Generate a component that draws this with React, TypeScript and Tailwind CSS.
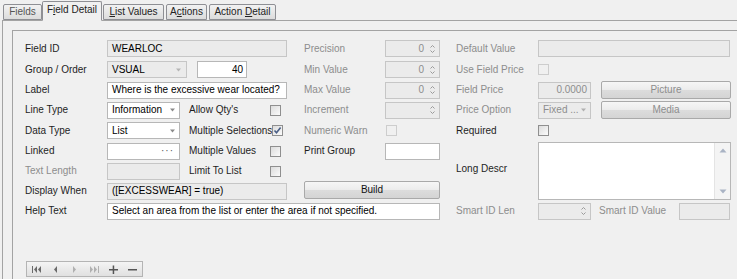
import React from 'react';

type Kids = { children?: React.ReactNode; className?: string };

const Field = ({ children, disabled, className = '' }: Kids & { disabled?: boolean }) => (
  <div
    className={`flex h-[17px] shrink-0 items-center overflow-hidden whitespace-nowrap border px-[4px] ${
      disabled ? 'border-[#c6c6c6] bg-[#ebebeb]' : 'border-[#b7b7b7] bg-white'
    } ${className}`}
  >
    {children}
  </div>
);

const DownArrow = ({ color = '#8a8a8a' }: { color?: string }) => (
  <svg width="7" height="4" viewBox="0 0 7 4" className="shrink-0">
    <path d="M1 0.5h5L3.5 3.5z" fill={color} />
  </svg>
);

const SpinArrows = () => (
  <svg width="7" height="12" viewBox="0 0 7 12" className="shrink-0">
    <path d="M1.5 4.5L3.5 2.5L5.5 4.5" fill="none" stroke="#9a9a9a" strokeWidth="1" />
    <path d="M1.5 7.5L3.5 9.5L5.5 7.5" fill="none" stroke="#9a9a9a" strokeWidth="1" />
  </svg>
);

const Check = ({ checked, disabled }: { checked?: boolean; disabled?: boolean }) => (
  <div
    className={`flex h-[11px] w-[11px] shrink-0 items-center justify-center border ${
      disabled ? 'border-[#cdcdcd] bg-[#f0f0f0]' : 'border-[#8f8f8f] bg-gradient-to-br from-[#dcdcdc] to-[#fbfbfb]'
    }`}
  >
    {checked && (
      <svg width="9" height="9" viewBox="0 0 9 9">
        <path d="M1.5 4.5L3.5 6.8L7.6 1.5" fill="none" stroke="#4a5f86" strokeWidth="1.6" />
      </svg>
    )}
  </div>
);

const Button = ({ children, disabled, className = '' }: Kids & { disabled?: boolean }) => (
  <div
    className={`flex h-[18px] shrink-0 items-center justify-center rounded-[2px] border border-[#a9a9a9] bg-[linear-gradient(#f6f6f6_0%,#ececec_48%,#dcdcdc_52%,#d4d4d4_100%)] ${
      disabled ? 'text-[#8d8d8d]' : 'text-[#111]'
    } ${className}`}
  >
    {children}
  </div>
);

const Label = ({ children, dim, className = '' }: Kids & { dim?: boolean }) => (
  <div className={`flex items-center whitespace-nowrap ${dim ? 'text-[#8d8d8d]' : 'text-[#1e1e1e]'} ${className}`}>
    {children}
  </div>
);

const Tab = ({ children, active, className = '' }: Kids & { active?: boolean }) => (
  <div
    className={`flex items-center justify-center rounded-t-[2px] border border-[#8e8f94] text-[#222] ${
      active
        ? 'relative z-10 -mb-px h-[20px] border-b-[#f0f0f0] bg-[#f0f0f0] pb-[2px]'
        : 'h-[16px] bg-[linear-gradient(#f2f2f2,#dcdcdc)]'
    } ${className}`}
  >
    {children}
  </div>
);

const NavIcon = ({ kind, color }: { kind: string; color: string }) => (
  <svg width="11" height="9" viewBox="0 0 11 9">
    {kind === 'first' && (
      <g fill={color}>
        <rect x="1" y="1" width="1" height="7" />
        <path d="M6 1v7L3 4.5z" />
        <path d="M10 1v7L7 4.5z" />
      </g>
    )}
    {kind === 'prev' && <path d="M7 1v7L4 4.5z" fill={color} />}
    {kind === 'next' && <path d="M4 1v7L7 4.5z" fill={color} />}
    {kind === 'last' && (
      <g fill={color}>
        <path d="M1 1v7L4 4.5z" />
        <path d="M5 1v7L8 4.5z" />
        <rect x="9" y="1" width="1" height="7" />
      </g>
    )}
    {kind === 'add' && (
      <g fill={color}>
        <rect x="1" y="4" width="9" height="1.5" />
        <rect x="4.7" y="0.5" width="1.5" height="8.5" />
      </g>
    )}
    {kind === 'del' && <rect x="1" y="4" width="9" height="1.5" fill={color} />}
  </svg>
);

export default function App() {
  return (
    <div className="h-[279px] w-[737px] overflow-hidden bg-[#f0f0f0] font-['Liberation_Sans',Arial,sans-serif] text-[10px] leading-none">
      {/* tab headers */}
      <div className="flex h-[20px] items-end pl-[3px]">
        <Tab className="w-[39px] text-[#555]">Fields</Tab>
        <Tab active className="w-[60px]">
          F<span className="underline">i</span>eld Detail
        </Tab>
        <Tab className="ml-px w-[61px]">
          <span className="underline">L</span>ist Values
        </Tab>
        <Tab className="ml-[2px] w-[41px]">
          A<span className="underline">c</span>tions
        </Tab>
        <Tab className="ml-[2px] w-[67px]">
          Action&nbsp;<span className="underline">D</span>etail
        </Tab>
      </div>

      {/* tab page */}
      <div className="ml-[2px] h-[260px] border-l border-t border-[#a3a3a3] pl-[9px] pt-[9px]">
        <div className="h-full border-l border-t border-[#a3a3a3] pl-[12px] pt-[7px]">
          <div className="grid grid-cols-[82px_180px_17px_81px_55px_16px_82px_193px] grid-rows-[21px_21px_20px_20px_21px_20px_20px_20px_20px] items-center">
            {/* row 1 */}
            <Label className="col-start-1 row-start-1">Field ID</Label>
            <Field disabled className="col-start-2 row-start-1">WEARLOC</Field>
            <Label dim className="col-start-4 row-start-1">Precision</Label>
            <Field disabled className="col-start-5 row-start-1 justify-end gap-[5px] pr-[3px] text-[#8d8d8d]">
              0<SpinArrows />
            </Field>
            <Label dim className="col-start-7 row-start-1">Default Value</Label>
            <Field disabled className="col-start-8 row-start-1 mr-px" />

            {/* row 2 */}
            <Label className="col-start-1 row-start-2">Group / Order</Label>
            <div className="col-start-2 row-start-2 flex gap-[10px]">
              <Field disabled className="w-[80px] justify-between">
                VSUAL<DownArrow color="#b5b5b5" />
              </Field>
              <Field className="w-[50px] justify-end pr-[3px]">40</Field>
            </div>
            <Label dim className="col-start-4 row-start-2">Min Value</Label>
            <Field disabled className="col-start-5 row-start-2 justify-end gap-[5px] pr-[3px] text-[#8d8d8d]">
              0<SpinArrows />
            </Field>
            <Label dim className="col-start-7 row-start-2">Use Field Price</Label>
            <div className="col-start-8 row-start-2">
              <Check disabled />
            </div>

            {/* row 3 */}
            <Label className="col-start-1 row-start-3">Label</Label>
            <Field className="col-start-2 row-start-3">Where is the excessive wear located?</Field>
            <Label dim className="col-start-4 row-start-3">Max Value</Label>
            <Field disabled className="col-start-5 row-start-3 justify-end gap-[5px] pr-[3px] text-[#8d8d8d]">
              0<SpinArrows />
            </Field>
            <Label dim className="col-start-7 row-start-3">Field Price</Label>
            <div className="col-start-8 row-start-3 flex items-center gap-[10px]">
              <Field disabled className="w-[53px] justify-end pr-[3px] text-[#8d8d8d]">0.0000</Field>
              <Button disabled className="w-[130px]">Picture</Button>
            </div>

            {/* row 4 */}
            <Label className="col-start-1 row-start-4">Line Type</Label>
            <div className="col-start-2 row-start-4 flex items-center">
              <Field className="w-[73px] justify-between pr-[3px]">
                Information<DownArrow />
              </Field>
              <Label className="ml-[9px] flex-1">Allow Qty's</Label>
              <div className="mr-[6px]">
                <Check />
              </div>
            </div>
            <Label dim className="col-start-4 row-start-4">Increment</Label>
            <Field disabled className="col-start-5 row-start-4 justify-end pr-[3px]">
              <SpinArrows />
            </Field>
            <Label dim className="col-start-7 row-start-4">Price Option</Label>
            <div className="col-start-8 row-start-4 flex items-center gap-[10px]">
              <Field disabled className="w-[53px] justify-between pr-[3px] text-[#8d8d8d]">
                Fixed ...<DownArrow color="#b0b0b0" />
              </Field>
              <Button disabled className="w-[130px]">Media</Button>
            </div>

            {/* row 5 */}
            <Label className="col-start-1 row-start-5">Data Type</Label>
            <div className="col-start-2 row-start-5 flex items-center">
              <Field className="w-[73px] justify-between pr-[3px]">
                List<DownArrow />
              </Field>
              <Label className="ml-[9px] flex-1">Multiple Selections</Label>
              <div className="mr-[6px]">
                <Check checked />
              </div>
            </div>
            <Label dim className="col-start-4 row-start-5">Numeric Warn</Label>
            <div className="col-start-5 row-start-5 pl-px">
              <Check disabled />
            </div>
            <Label className="col-start-7 row-start-5">Required</Label>
            <div className="col-start-8 row-start-5">
              <Check />
            </div>

            {/* row 6 */}
            <Label className="col-start-1 row-start-6">Linked</Label>
            <div className="col-start-2 row-start-6 flex items-center">
              <Field className="w-[73px] justify-end pr-[5px] tracking-[1px] text-[#555]">···</Field>
              <Label className="ml-[9px] flex-1">Multiple Values</Label>
              <div className="mr-[6px]">
                <Check />
              </div>
            </div>
            <Label className="col-start-4 row-start-6">Print Group</Label>
            <Field className="col-start-5 row-start-6" />
            <Label className="col-start-7 row-start-6 row-span-3 -mt-[5px]">Long Descr</Label>
            <div className="col-start-8 row-start-6 row-span-3 mt-[1px] flex h-[58px] self-start border border-[#b7b7b7] bg-white">
              <div className="flex-1" />
              <div className="flex w-[16px] flex-col items-center justify-between border-l border-[#e4e4e4] bg-[#f4f4f4] py-[5px]">
                <svg width="8" height="5" viewBox="0 0 8 5">
                  <path d="M0.5 4.5h7L4 0.5z" fill="#a9b3c4" />
                </svg>
                <svg width="8" height="5" viewBox="0 0 8 5">
                  <path d="M0.5 0.5h7L4 4.5z" fill="#a9b3c4" />
                </svg>
              </div>
            </div>

            {/* row 7 */}
            <Label dim className="col-start-1 row-start-7">Text Length</Label>
            <div className="col-start-2 row-start-7 flex items-center">
              <Field disabled className="w-[73px]" />
              <Label className="ml-[9px] flex-1">Limit To List</Label>
              <div className="mr-[6px]">
                <Check />
              </div>
            </div>

            {/* row 8 */}
            <Label className="col-start-1 row-start-8">Display When</Label>
            <Field disabled className="col-start-2 row-start-8">([EXCESSWEAR] = true)</Field>
            <Button className="col-start-4 col-span-2 row-start-8 -mt-[2px]">Build</Button>

            {/* row 9 */}
            <Label className="col-start-1 row-start-9">Help Text</Label>
            <Field className="col-start-2 col-span-4 row-start-9">
              Select an area from the list or enter the area if not specified.
            </Field>
            <Label dim className="col-start-7 row-start-9">Smart ID Len</Label>
            <div className="col-start-8 row-start-9 flex items-center">
              <Field disabled className="w-[53px] justify-end pr-[3px]">
                <SpinArrows />
              </Field>
              <Label dim className="ml-[8px] flex-1">Smart ID Value</Label>
              <Field disabled className="mr-px w-[51px]" />
            </div>
          </div>

          {/* record navigator */}
          <div className="ml-px mt-[40px] flex h-[16px] w-[117px] border border-[#b4b4b4] bg-[linear-gradient(#f4f4f4,#e0e0e0)]">
            {[
              ['first', '#6a6a6a'],
              ['prev', '#6a6a6a'],
              ['next', '#b0b0b0'],
              ['last', '#b0b0b0'],
              ['add', '#555555'],
              ['del', '#555555'],
            ].map(([k, c]) => (
              <div key={k} className="flex flex-1 items-center justify-center">
                <NavIcon kind={k} color={c} />
              </div>
            ))}
          </div>
        </div>
      </div>
    </div>
  );
}
